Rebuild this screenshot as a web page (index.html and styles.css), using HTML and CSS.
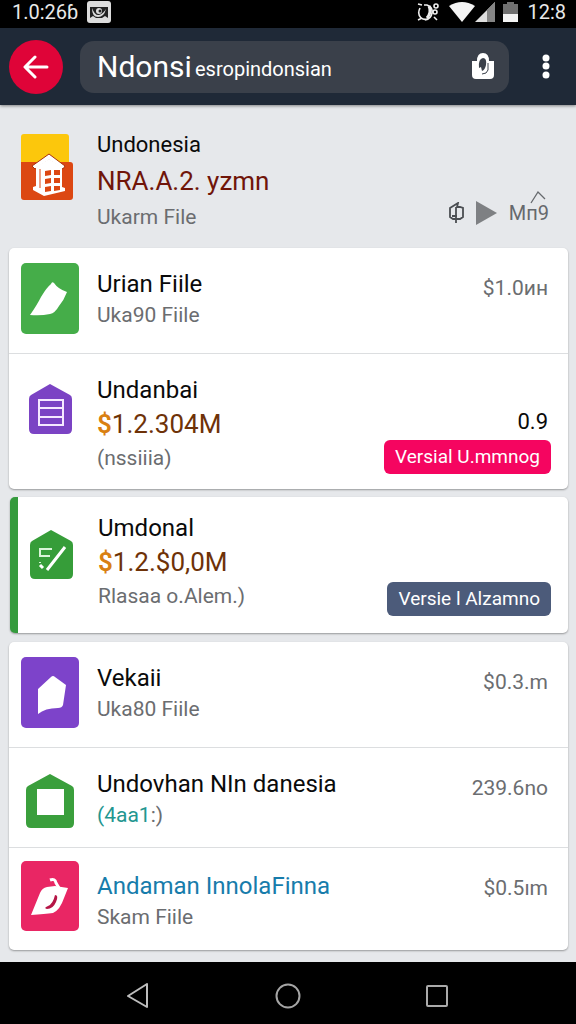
FILE: index.html
```html
<!DOCTYPE html>
<html lang="id">
<head>
<meta charset="utf-8">
<meta name="viewport" content="width=device-width, initial-scale=1">
<title>Ndonsi</title>
<link rel="stylesheet" href="styles.css">
</head>
<body>
<div class="status">
  <span class="clock">1.0:26ɓ</span>
  <svg class="status-photo" width="24" height="22" viewBox="0 0 24 22"><rect width="24" height="22" rx="3" fill="#dcdcdc"/><path d="M3 6h18v11l-3-2-3 2H9l-3-2-3 2z" fill="#222"/><path d="M5 7q3 8 7 7t7-6q-2 8-8 8T5 7z" fill="#ddd"/><circle cx="12" cy="10" r="3" fill="#ddd"/><circle cx="13" cy="10" r="1.5" fill="#222"/></svg>
  <span class="spacer"></span>
  <svg width="22" height="20" viewBox="0 0 22 20" fill="none" stroke="#eee" stroke-width="1.6"><path d="M1 2l4 1M3 6q-3 6 1 10 3 2 6 1M7 3h3q6 2 5 8-1 6-7 7M1 18l4-2"/><path d="M12 4q3 6-2 12" stroke-width="3"/><circle cx="19" cy="4" r="2"/><circle cx="18" cy="10" r="2"/><path d="M17 15l3 3"/></svg>
  <svg class="wifi" width="26" height="20" viewBox="0 0 26 20"><path d="M0 4Q13-4 26 4L13 20z" fill="#f4f4f4"/></svg>
  <svg width="20" height="20" viewBox="0 0 20 20"><path d="M0 20L20 0v20z" fill="#dedede"/><path d="M12 8l8-8v20h-8z" fill="#858585"/></svg>
  <svg class="battery" width="15" height="20" viewBox="0 0 15 20"><path d="M4 0h7v2h4v10H0V2h4z" fill="#707070"/><path d="M0 12h15v8H0z" fill="#f4f4f4"/></svg>
  <span class="clock">12:8</span>
</div>

<header class="appbar">
  <button class="back" aria-label="Back"><svg width="26" height="26" viewBox="0 0 26 26" fill="none" stroke="#fff" stroke-width="3" stroke-linecap="round" stroke-linejoin="round"><path d="M12 3L2 13l10 10M3 13h21"/></svg></button>
  <div class="search">
    <input class="query" type="text" value="Ndonsi" aria-label="Search">
    <span class="hint">esropindonsian</span>
    <button class="plain" aria-label="Bag"><svg width="22" height="27" viewBox="0 0 22 27"><path d="M0 8h5q0-8 6-8t6 8h5v14q0 4-4 4H4q-4 0-4-4z" fill="#fff"/><path d="M7 15q-1-9 4-10 4 0 3 7-1 5-4 6l-1-4z" fill="#3a404a"/><path d="M16 10v7q-1 4-6 4" fill="none" stroke="#3a404a" stroke-width="1"/></svg></button>
  </div>
  <button class="plain more" aria-label="More"><svg width="8" height="25" viewBox="0 0 8 25" fill="#fff"><circle cx="4" cy="4" r="3.5"/><circle cx="4" cy="12" r="3.5"/><circle cx="4" cy="21" r="3.5"/></svg></button>
</header>

<main class="content">
  <section class="row feature">
    <div class="icon"><svg width="58" height="68" viewBox="0 0 58 68"><path d="M3 1h42q3 0 3 3v28H0V4q0-3 3-3z" fill="#fcc70c"/><path d="M0 29h19l9-8 9 8h12q3 0 3 3v32q0 3-3 3H3q-3 0-3-3z" fill="#dc4712"/><path d="M11 33l17-12 16 12-2 3-14-9-14 9z" fill="#fff" stroke="#a9310e"/><path d="M15 34l13-8 13 8v20l3 1v3l-21 5-11-6v-3l3-1z" fill="#fff"/><path d="M19 36v19" stroke="#dc4712"/><path d="M24 38l6-1v5l-6 1zm9-1h6v5h-6zm-9 9l6-1v5l-6 1zm9-1h6v5h-6zm-9 9l6-1v5l-6 1zm9-1h6v4l-6 1z" fill="#dc4712"/></svg></div>
    <div class="text"><h2 class="title">Undonesia</h2><p class="price red">NRA.A.2. yzmn</p><p class="sub">Ukarm File</p></div>
    <div class="side tools">
      <svg width="16" height="22" viewBox="0 0 16 22" fill="none" stroke="#4b4e52" stroke-width="1.8"><path d="M10 1L2 6v9l3 2h7l3-2V6l-3-1H9zM8 5v16M4 14h5"/></svg>
      <svg width="21" height="24" viewBox="0 0 21 24"><path d="M0 0l21 12L0 24z" fill="#7e8083"/></svg>
      <span class="count">Mп9<svg class="caret" width="16" height="13" viewBox="0 0 16 13" fill="none" stroke="#66696d" stroke-width="1.3"><path d="M1 12L8 1l7 7"/></svg></span>
    </div>
  </section>

  <ul class="card">
    <li class="row file">
      <div class="icon"><svg width="58" height="71" viewBox="0 0 58 71"><rect width="58" height="71" rx="5" fill="#45ad49"/><path d="M9 52Q16 42 20 34 26 24 30 21q1-3 3-1 4 6 13 9-3 8-8 14-4 7-9 8-9 2-20 1z" fill="#fff"/></svg></div>
      <div class="text"><h2 class="title">Urian Fiile</h2><p class="sub">Uka90 Fiile</p></div>
      <span class="side amount">$1.0ин</span>
    </li>
    <li class="row offer">
      <div class="icon"><svg width="43" height="50" viewBox="0 0 43 50"><path d="M21 0l20 11q2 1 2 4v30q0 5-5 5H5q-5 0-5-5V15q0-3 2-4z" fill="#7b43c4"/><path d="M10 16h24v25H10zM10 24h24M10 33h24" fill="none" stroke="#f5e9ff" stroke-width="2"/></svg></div>
      <div class="text"><h2 class="title">Undanbai</h2><p class="price"><span class="dollar">$</span>1.2.304M</p><p class="sub">(nssiiia)</p></div>
      <div class="side actions"><span class="score">0.9</span><button class="badge pink">Versial U.mmnog</button></div>
    </li>
  </ul>

  <ul class="card marked">
    <li class="row selected">
      <div class="icon"><svg width="43" height="49" viewBox="0 0 43 49"><path d="M21 0l20 11q2 1 2 4v29q0 5-5 5H5q-5 0-5-5V15q0-3 2-4z" fill="#369d39"/><path d="M22 19H10v7h10M10 32v1" fill="none" stroke="#d9f5d8" stroke-width="2"/><path d="M10 35l3 3M17 40l18-23" stroke="#fff" stroke-width="3"/></svg></div>
      <div class="text"><h2 class="title">Umdonal</h2><p class="price"><span class="dollar">$</span>1.2.$0,0M</p><p class="sub">Rlasaa o.Alem.)</p></div>
      <div class="side actions"><button class="badge slate">Versie l Alzamno</button></div>
    </li>
  </ul>

  <ul class="card">
    <li class="row file">
      <div class="icon"><svg width="58" height="71" viewBox="0 0 58 71"><rect width="58" height="71" rx="5" fill="#7d43ca"/><path d="M17 32l13-12q2-2 4 0l11 8-3 20q-1 3-5 3-13 0-20 6z" fill="#fff"/></svg></div>
      <div class="text"><h2 class="title">Vekaii</h2><p class="sub">Uka80 Fiile</p></div>
      <span class="side amount">$0.3.m</span>
    </li>
    <li class="row store">
      <div class="icon"><svg width="48" height="54" viewBox="0 0 48 54"><path d="M24 0l22 12q2 1 2 4v33q0 5-5 5H5q-5 0-5-5V16q0-3 2-4z" fill="#3a9f3c"/><path d="M11 15h27v26H11z" fill="#fff"/></svg></div>
      <div class="text"><h2 class="title">Undovhan NIn danesia</h2><p class="sub"><span class="teal">(4aa1</span>:)</p></div>
      <span class="side amount">239.6no</span>
    </li>
    <li class="row last">
      <div class="icon"><svg width="58" height="70" viewBox="0 0 58 70"><rect width="58" height="70" rx="5" fill="#e92664"/><path d="M10 54l9-22q2-5 7-6l8-1 13 2-4 10q-4 12-11 15-8 1-22 2z" fill="#fff"/><path d="M29 19q5-2 6 3l3 5" fill="none" stroke="#fff" stroke-width="3"/><path d="M34 34q4 0 1 7-3 7-9 7-4-1 1-3 5-2 7-11z" fill="#b51546"/></svg></div>
      <div class="text"><h2 class="title"><a class="link" href="#andaman">Andaman InnolaFinna</a></h2><p class="sub">Skam Fiile</p></div>
      <span class="side amount">$0.5ım</span>
    </li>
  </ul>
</main>

<nav class="navbar">
  <button class="plain" aria-label="Back"><svg width="24" height="26" viewBox="0 0 24 26" fill="none" stroke="#bdbdbd" stroke-width="2" stroke-linejoin="round"><path d="M21 1v23L2 13z"/></svg></button>
  <button class="plain" aria-label="Home"><svg width="26" height="26" viewBox="0 0 26 26" fill="none" stroke="#a5a5a5" stroke-width="2"><circle cx="13" cy="13" r="11.5"/></svg></button>
  <button class="plain" aria-label="Recent apps"><svg width="22" height="22" viewBox="0 0 22 22" fill="none" stroke="#aaa" stroke-width="2"><rect x="1" y="1" width="20" height="20" rx="1"/></svg></button>
</nav>
</body>
</html>
```
FILE: styles.css
```css
* { box-sizing: border-box; }
body {
  margin: 0;
  min-height: 100vh;
  display: flex;
  flex-direction: column;
  background: #e6e8eb;
  font-family: Roboto, "Liberation Sans", sans-serif;
  color: #0a0a0a;
}
h2, p, ul { margin: 0; padding: 0; font-weight: 400; }
ul { list-style: none; }
svg { display: block; flex: none; }
button, input { font: inherit; color: inherit; border: 0; padding: 0; background: none; }

.status {
  display: flex;
  align-items: center;
  height: 28px;
  padding: 0 10px 4px 12px;
  background: #000;
  color: #e8e8e8;
}
.clock { font-size: 20px; line-height: 24px; }
.status-photo { margin-left: 9px; }
.spacer { flex: 1; }
.wifi { margin-left: 10px; }
.battery { margin: 0 9px 0 8px; }

.appbar {
  display: flex;
  align-items: center;
  height: 77px;
  padding: 0 26px 0 9px;
  background: #1f2937;
  box-shadow: 0 1px 3px rgba(0, 0, 0, .45);
  color: #fff;
}
.back {
  display: grid;
  place-items: center;
  flex: none;
  width: 54px;
  height: 54px;
  border-radius: 50%;
  background: #df0438;
}
.search {
  display: flex;
  align-items: center;
  flex: 1;
  min-width: 0;
  height: 52px;
  margin: 0 33px 0 17px;
  padding: 0 15px 0 17px;
  border-radius: 14px;
  background: #3a404a;
}
.query { width: 98px; font-size: 30px; line-height: 36px; }
.hint { flex: 1; padding-top: 4px; font-size: 20px; line-height: 28px; }

.content { flex: 1; padding: 0 8px 12px 9px; }
.card {
  margin-bottom: 8px;
  border-radius: 5px;
  background: #fff;
  box-shadow: 0 1px 2px rgba(0, 0, 0, .35);
}
.card:last-child { margin-bottom: 0; }
.marked {
  overflow: hidden;
  margin: 0 0 9px 1px;
  border-left: 8px solid #359b3d;
}
.row { display: flex; align-items: flex-start; padding: 20px 20px 19px 12px; }
.row + .row { border-top: 1px solid #dcdee0; }
.icon { display: flex; justify-content: center; flex: none; width: 58px; margin-right: 18px; }
.text { flex: 1; min-width: 0; }
.title { font-size: 24px; line-height: 32px; }
.price { font-size: 26px; line-height: 36px; color: #6e3208; }
.sub { font-size: 21px; line-height: 30px; color: #6b6d70; }
.red { color: #701509; }
.dollar { font-weight: 600; color: #d98012; }
.teal { color: #239690; }
.link { color: #177cab; text-decoration: none; }
.side { flex: none; }
.amount { font-size: 21px; line-height: 32px; padding-top: 4px; color: #6b6d70; }

.feature { padding: 24px 19px 15px 12px; }
.feature .icon { margin-top: 4px; }
.feature .text { display: grid; gap: 2px; }
.feature .title { font-size: 22px; }
.feature .sub { line-height: 32px; }
.tools { display: flex; align-items: center; align-self: flex-end; gap: 12px; padding-bottom: 7px; }
.count { position: relative; font-size: 20px; line-height: 26px; color: #66696d; }
.caret { position: absolute; right: 3px; top: -9px; }

.file .icon { margin-top: -5px; }
.offer { padding: 20px 17px 15px 12px; }
.offer .icon { margin-top: 10px; }
.offer .sub, .selected .sub { line-height: 32px; }
.selected { padding: 15px 17px 17px 4px; }
.selected .icon { margin-top: 18px; }
.selected .text { padding-bottom: 4px; }
.store { padding-bottom: 17px; }
.store .icon { margin-top: 6px; }
.last { padding-bottom: 18px; }
.last .icon { margin-top: -7px; }
.last .text { padding-top: 2px; }

.actions { display: flex; flex-direction: column; align-items: flex-end; align-self: flex-end; }
.score { padding-right: 3px; font-size: 22px; line-height: 36px; }
.badge { height: 34px; padding: 0 11px; border-radius: 6px; font-size: 19px; line-height: 32px; color: #fff; }
.pink { background: #f50560; }
.slate { background: #4c5b7a; }

.navbar {
  display: flex;
  align-items: center;
  justify-content: center;
  gap: 125px;
  height: 63px;
  padding: 4px 2px 0 0;
  background: #000;
}
```
